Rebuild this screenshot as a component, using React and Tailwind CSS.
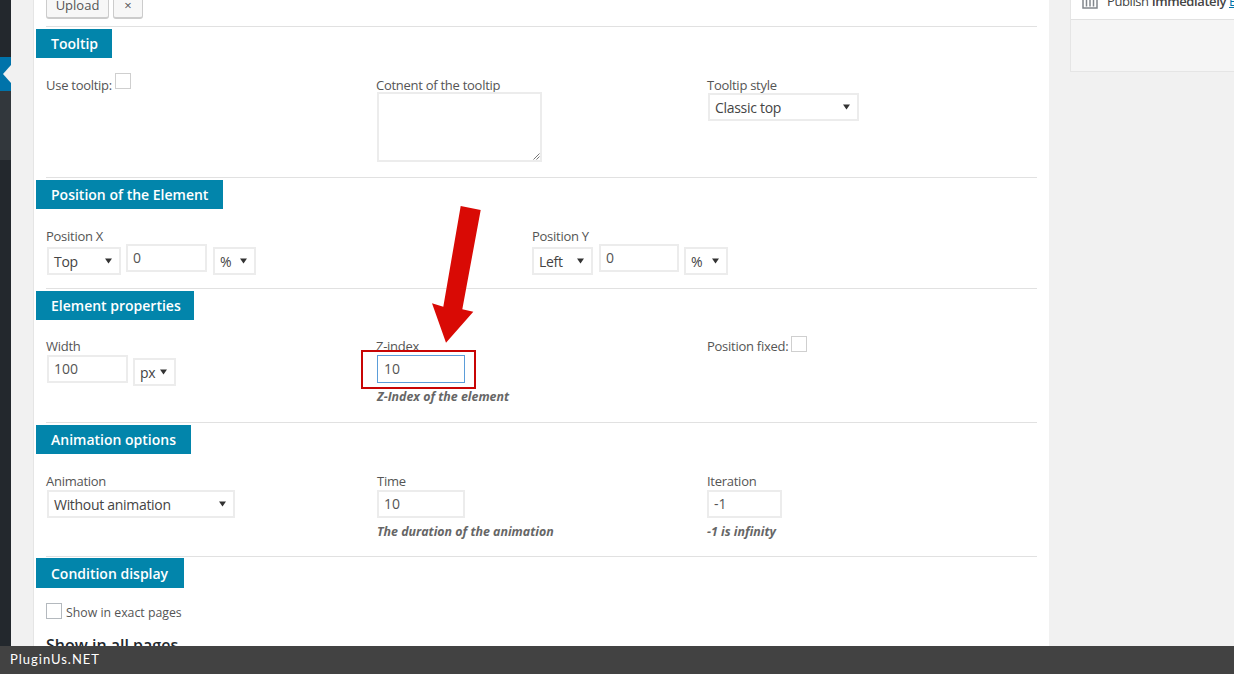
import React from 'react';

const Caret = () => (
  <svg width="7" height="6" viewBox="0 0 7 6" className="shrink-0 mr-px">
    <path d="M0 0.5h7L3.5 5.5z" fill="#333" />
  </svg>
);

const Select = ({ value, className }) => (
  <div className={`flex items-center justify-between h-[28px] bg-white border-2 border-[#ececec] pl-[5px] pr-[6px] text-[14px] tracking-[-0.3px] text-[#444] ${className}`}>
    <span>{value}</span>
    <Caret />
  </div>
);

const Input = ({ value, className, focused }) => (
  <div className={`flex items-center h-[28px] bg-white pb-[2px] text-[14px] text-[#555] ${focused ? 'border border-[#5b9dd9] pl-[6px]' : 'border-2 border-[#ececec] pl-[5px]'} ${className}`}>
    {value}
  </div>
);

const Checkbox = ({ className }) => (
  <span className={`inline-block shrink-0 w-[16px] h-[16px] bg-white border ${className}`} />
);

const Label = ({ children }) => (
  <div className="text-[13px] leading-[18px] tracking-[-0.27px] text-[#555]">{children}</div>
);

const Hint = ({ children }) => (
  <div className="mt-[5px] text-[12.4px] leading-[18px] font-bold italic text-[#666]">{children}</div>
);

const Section = ({ title, width, bodyClass, children }) => (
  <section>
    <div className={`flex items-center h-[29px] ml-[2px] pl-[15px] bg-[#0285ab] text-white text-[14px] font-semibold ${width}`}>
      {title}
    </div>
    <div className={`pl-[12px] ${bodyClass}`}>{children}</div>
  </section>
);

const Divider = ({ className }) => <div className={`h-px ml-[12px] mr-[12px] bg-[#e1e1e1] ${className}`} />;

export default function App() {
  return (
    <div className="relative flex h-[674px] w-[1234px] overflow-hidden bg-[#f1f1f1] font-['Open_Sans',sans-serif]">
      {/* admin menu strip */}
      <aside className="w-[11px] shrink-0 bg-[#23282d] flex flex-col">
        <div className="h-[57px]" />
        <div className="flex items-center justify-end h-[34px] bg-[#0073aa]">
          <svg width="8" height="18" viewBox="0 0 8 18">
            <path d="M8 0v18L0 9z" fill="#f1f1f1" />
          </svg>
        </div>
        <div className="h-[69px] bg-[#32373c]" />
      </aside>

      {/* main panel */}
      <main className="ml-[22px] w-[1016px] shrink-0 h-full bg-white border-l border-[#e5e5e5]">
        <div className="flex items-end gap-[4px] h-[26px] pl-[12px] pb-[7px]">
          <button className="w-[63px] h-[26px] rounded-[3px] bg-[#f7f7f7] border border-[#ccc] border-b-2 text-[13px] text-[#555]">Upload</button>
          <button className="w-[30px] h-[26px] rounded-[3px] bg-[#f7f7f7] border border-[#ccc] border-b-2 text-[13px] text-[#555]">×</button>
        </div>
        <Divider className="mb-[2px]" />

        <Section title="Tooltip" width="w-[76px]" bodyClass="h-[119px] pt-[18px] grid grid-cols-[331px_330px_1fr]">
          <div className="flex items-start gap-[3px]">
            <Label>Use tooltip:</Label>
            <Checkbox className="mt-[-3px] border-[#cfcfcf]" />
          </div>
          <div>
            <div className="-ml-px"><Label>Cotnent of the tooltip</Label></div>
            <div className="relative w-[165px] h-[70px] -mt-[2px] bg-white border-2 border-[#ececec]">
              <svg width="7" height="7" viewBox="0 0 7 7" className="absolute right-0 bottom-0">
                <path d="M0.5 6.5L6.5 0.5M3.5 6.5L6.5 3.5" stroke="#777" fill="none" />
              </svg>
            </div>
          </div>
          <div>
            <Label>Tooltip style</Label>
            <Select value="Classic top" className="w-[151px] -mt-px ml-px" />
          </div>
        </Section>
        <Divider className="mb-[2px]" />

        <Section title="Position of the Element" width="w-[187px]" bodyClass="h-[79px] pt-[18px] grid grid-cols-[486px_1fr]">
          <div>
            <Label>Position X</Label>
            <div className="flex gap-[5px] ml-px">
              <Select value="Top" className="w-[74px] mt-[2px]" />
              <Input value="0" className="w-[81px] -mt-px" />
              <Select value="%" className="w-[43px] ml-px mt-[2px]" />
            </div>
          </div>
          <div>
            <Label>Position Y</Label>
            <div className="flex gap-[6px]">
              <Select value="Left" className="w-[61px] mt-[2px]" />
              <Input value="0" className="w-[80px] -mt-px" />
              <Select value="%" className="w-[44px] -ml-px mt-[2px]" />
            </div>
          </div>
        </Section>
        <Divider className="mb-[2px]" />

        <Section title="Element properties" width="w-[158px]" bodyClass="h-[102px] pt-[17px] grid grid-cols-[331px_330px_1fr]">
          <div>
            <Label>Width</Label>
            <div className="flex gap-[5px] ml-px">
              <Input value="100" className="w-[81px]" />
              <Select value="px" className="w-[43px] mt-[3px]" />
            </div>
          </div>
          <div>
            <div className="-ml-px"><Label>Z-index</Label></div>
            <Input value="10" focused className="w-[88px]" />
            <Hint>Z-Index of the element</Hint>
          </div>
          <div className="flex items-start gap-[3px]">
            <Label>Position fixed:</Label>
            <Checkbox className="mt-[-1px] border-[#cfcfcf]" />
          </div>
        </Section>
        <Divider className="mb-[2px]" />

        <Section title="Animation options" width="w-[155px]" bodyClass="h-[102px] pt-[18px] grid grid-cols-[331px_330px_1fr]">
          <div>
            <Label>Animation</Label>
            <Select value="Without animation" className="w-[188px] ml-px" />
          </div>
          <div>
            <Label>Time</Label>
            <Input value="10" className="w-[88px]" />
            <Hint>The duration of the animation</Hint>
          </div>
          <div>
            <Label>Iteration</Label>
            <Input value="-1" className="w-[75px]" />
            <Hint>-1 is infinity</Hint>
          </div>
        </Section>
        <Divider className="mb-px" />

        <Section title="Condition display" width="w-[148px] h-[30px]" bodyClass="pt-[15px]">
          <div className="flex items-center gap-[4px] h-[16px]">
            <Checkbox className="border-[#b4b9be]" />
            <span className="pt-[4px] text-[12.3px] text-[#555]">Show in exact pages</span>
          </div>
          <h3 className="mt-[14px] text-[16px] leading-[24px] font-semibold text-[#23282d]">Show in all pages</h3>
        </Section>
      </main>

      {/* publish box */}
      <aside className="ml-[21px] flex-1 min-w-0">
        <div className="h-[72px] bg-[#f5f5f5] border-l border-b border-[#e5e5e5]">
          <div className="flex h-[20px] items-start gap-[9px] overflow-hidden bg-white border-b border-[#e1e1e1] pl-[11px] text-[13px] text-[#444]">
            <svg width="16" height="9" viewBox="0 0 16 9" className="shrink-0">
              <path d="M1 0v8h14V0M4.5 0v6.5M8 0v6.5M11.5 0v6.5" fill="none" stroke="#82878c" strokeWidth="1.5" />
            </svg>
            <span className="-mt-[8px] whitespace-nowrap tracking-[-0.4px]">
              Publish <b className="font-semibold">Immediately</b> <a className="text-[#0073aa] underline">Edit</a>
            </span>
          </div>
        </div>
      </aside>

      {/* annotations */}
      <svg width="60" height="144" viewBox="430 204 60 144" className="absolute left-[430px] top-[204px]">
        <path d="M460.7 206L480.7 210L462.3 309.3L473.3 311.7L446 342.7L432 303.3L443.3 306.7Z" fill="#d90a05" />
      </svg>
      <div className="absolute left-[361px] top-[350px] w-[115px] h-[39px] border-2 border-[#c80505]" />

      <footer className="absolute inset-x-0 bottom-0 h-[28px] bg-[#424242] flex items-center pl-[10px] text-[13px] tracking-[1px] text-white font-['Lato',sans-serif]">
        PluginUs.NET
      </footer>
    </div>
  );
}
